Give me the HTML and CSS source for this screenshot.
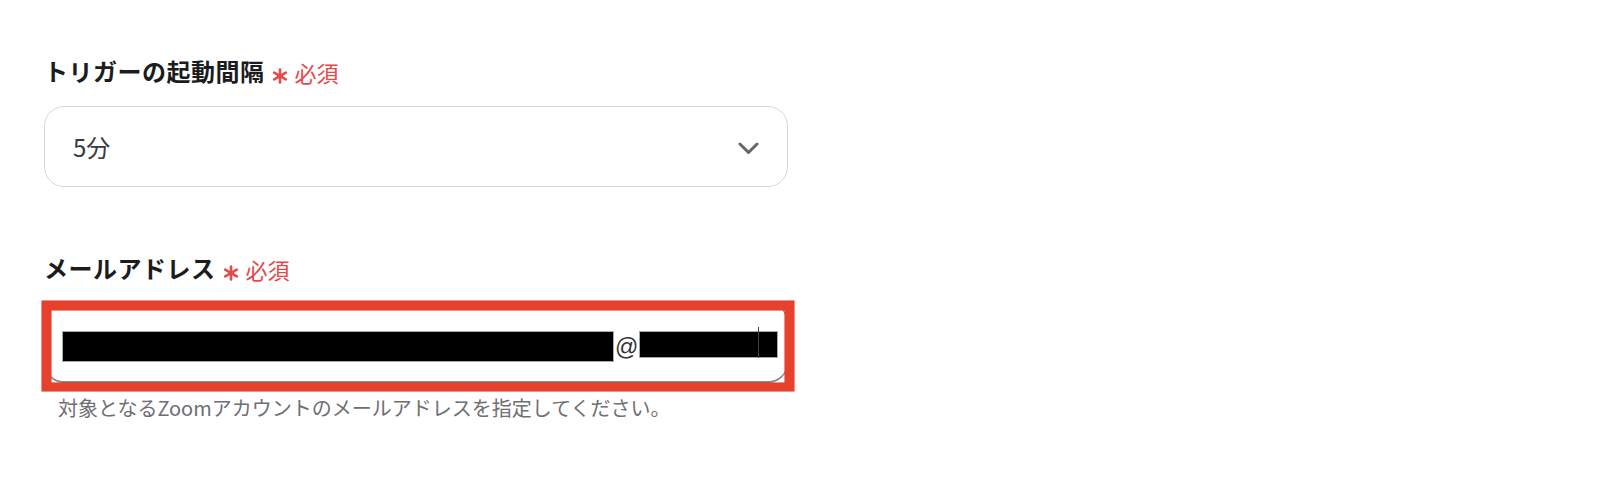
FILE: index.html
```html
<!DOCTYPE html>
<html lang="ja">
<head>
<meta charset="utf-8">
<title>Form</title>
<link rel="stylesheet" href="styles.css">
</head>
<body>
<div class="form">
  <div class="field">
    <div class="label">
      <span class="label-text">トリガーの起動間隔</span>
      <span class="req">
        <svg class="ast" width="16" height="16" viewBox="0 0 16 16"><g stroke="#e5484d" stroke-width="2.6" stroke-linecap="round"><line x1="8" y1="1.5" x2="8" y2="14.5"/><line x1="2.2" y1="4.7" x2="13.8" y2="11.3"/><line x1="2.2" y1="11.3" x2="13.8" y2="4.7"/></g></svg>
        <span class="req-text">必須</span>
      </span>
    </div>
    <div class="select">
      <span class="select-value">5分</span>
      <svg class="chev" width="21" height="13" viewBox="0 0 21 13"><polyline points="2,2 10.5,10.5 19,2" fill="none" stroke="#666" stroke-width="3" stroke-linecap="round" stroke-linejoin="round"/></svg>
    </div>
  </div>

  <div class="field field-email">
    <div class="label">
      <span class="label-text">メールアドレス</span>
      <span class="req">
        <svg class="ast" width="16" height="16" viewBox="0 0 16 16"><g stroke="#e5484d" stroke-width="2.6" stroke-linecap="round"><line x1="8" y1="1.5" x2="8" y2="14.5"/><line x1="2.2" y1="4.7" x2="13.8" y2="11.3"/><line x1="2.2" y1="11.3" x2="13.8" y2="4.7"/></g></svg>
        <span class="req-text">必須</span>
      </span>
    </div>
    <div class="input-wrap">
      <div class="input">
        <span class="redact redact-1"></span>
        <span class="at">@</span>
        <span class="redact redact-2"><span class="caret"></span></span>
      </div>
      <div class="annot"></div>
    </div>
    <p class="help">対象となるZoomアカウントのメールアドレスを指定してください。</p>
  </div>
</div>
</body>
</html>
```

FILE: styles.css
```css
html, body {
  margin: 0;
  padding: 0;
  background: #ffffff;
}

body {
  font-family: "Noto Sans CJK JP", "Noto Sans", sans-serif;
  color: #1f1f1f;
}

.form {
  padding: 54px 0 0 44px;
  width: 744px;
}

.field-email {
  margin-top: 64px;
}

.label {
  display: flex;
  align-items: center;
  height: 34px;
}

.label-text {
  font-size: 24px;
  font-weight: 700;
  line-height: 34px;
  color: #1c1c1c;
  letter-spacing: 0.5px;
}

.req {
  display: flex;
  align-items: center;
  margin-left: 7px;
}

.ast {
  margin-top: 9px;
  display: block;
}

.req-text {
  margin-left: 7px;
  font-size: 22px;
  line-height: 34px;
  color: #e5484d;
  margin-top: 2px;
}

.select {
  margin-top: 18px;
  height: 81px;
  box-sizing: border-box;
  border: 1.5px solid #d3d6db;
  border-radius: 20px;
  display: flex;
  align-items: center;
  justify-content: space-between;
  padding: 0 28px 0 28px;
}

.select-value {
  font-size: 24px;
  color: #3a3a3a;
  line-height: 34px;
}

.chev {
  display: block;
  margin-top: 4px;
}

.input-wrap {
  position: relative;
  margin-top: 18px;
}

.input {
  height: 80px;
  box-sizing: border-box;
  border: 1px solid #8a8a8a;
  border-bottom-width: 2px;
  border-radius: 20px;
  display: flex;
  align-items: flex-start;
  padding: 28px 0 0 18px;
}

.redact {
  display: block;
  background: #000000;
  box-shadow: 0 0 0 1px #a9a9a9;
}

.redact-1 {
  width: 550px;
  height: 29px;
}

.redact-2 {
  position: relative;
  width: 137px;
  height: 25px;
}

.at {
  font-family: "Liberation Sans", Arial, sans-serif;
  font-size: 23px;
  line-height: 26px;
  color: #333333;
  margin: 2px 2px 0 2px;
}

.caret {
  position: absolute;
  left: 118px;
  top: -5px;
  width: 1px;
  height: 31px;
  background: #444444;
}

.annot {
  position: absolute;
  left: -2px;
  top: -2px;
  width: 752px;
  height: 90px;
  box-sizing: border-box;
  border: 9px solid #e8412b;
  border-bottom-width: 8px;
  box-shadow: 0 0 0 0.5px #d42417, inset 0 0 0 0.5px #d42417;
  pointer-events: none;
}

.help {
  margin: 11px 0 0 14px;
  font-size: 20px;
  line-height: 28px;
  color: #6e6e73;
  white-space: nowrap;
}
```
